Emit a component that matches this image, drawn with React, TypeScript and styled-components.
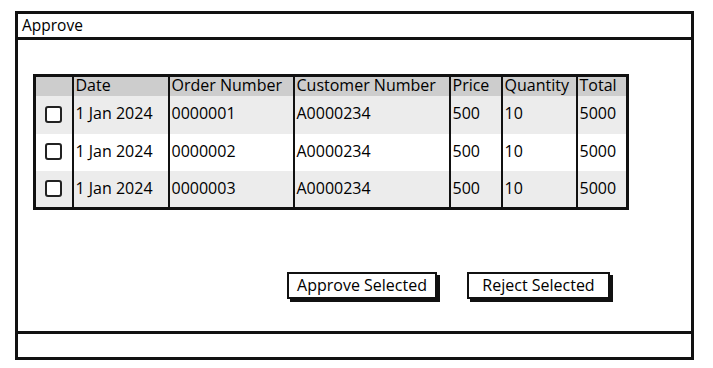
import styled, { createGlobalStyle } from "styled-components";

const GlobalStyle = createGlobalStyle`
  body {
    margin: 0;
    background: #fff;
    font-family: "Open Sans", "DejaVu Sans", sans-serif;
    color: #000;
  }
`;

type Order = {
  date: string;
  orderNumber: string;
  customerNumber: string;
  price: number;
  quantity: number;
};

const orders: Order[] = [
  { date: "1 Jan 2024", orderNumber: "0000001", customerNumber: "A0000234", price: 500, quantity: 10 },
  { date: "1 Jan 2024", orderNumber: "0000002", customerNumber: "A0000234", price: 500, quantity: 10 },
  { date: "1 Jan 2024", orderNumber: "0000003", customerNumber: "A0000234", price: 500, quantity: 10 },
];

const columns = [
  { title: "", width: 38 },
  { title: "Date", width: 96 },
  { title: "Order Number", width: 125 },
  { title: "Customer Number", width: 156 },
  { title: "Price", width: 52 },
  { title: "Quantity", width: 75 },
  { title: "Total", width: 51 },
];

export default function App() {
  return (
    <>
      <GlobalStyle />
      <Window>
        <TitleBar>Approve</TitleBar>
        <Content>
          <Table>
            <colgroup>
              {columns.map((c, i) => (
                <col key={i} style={{ width: c.width }} />
              ))}
            </colgroup>
            <thead>
              <tr>
                {columns.map((c, i) => (
                  <HeaderCell key={i}>{c.title}</HeaderCell>
                ))}
              </tr>
            </thead>
            <tbody>
              {orders.map((o, i) => (
                <Row key={o.orderNumber} $striped={i % 2 === 0}>
                  <CheckCell>
                    <Checkbox type="checkbox" />
                  </CheckCell>
                  <Cell>{o.date}</Cell>
                  <Cell>{o.orderNumber}</Cell>
                  <Cell>{o.customerNumber}</Cell>
                  <Cell>{o.price}</Cell>
                  <Cell>{o.quantity}</Cell>
                  <Cell>{o.price * o.quantity}</Cell>
                </Row>
              ))}
            </tbody>
          </Table>
          <Actions>
            <Button $width={150}>Approve Selected</Button>
            <Button $width={143}>Reject Selected</Button>
          </Actions>
        </Content>
        <Footer />
      </Window>
    </>
  );
}

const Window = styled.div`
  box-sizing: border-box;
  margin: 11px 0 0 15px;
  width: 679px;
  height: 349px;
  border: 3px solid #111;
  display: flex;
  flex-direction: column;
`;

const TitleBar = styled.div`
  height: 23px;
  line-height: 23px;
  padding-left: 4px;
  font-size: 15.5px;
  border-bottom: 3px solid #111;
`;

const Content = styled.div`
  flex: 1;
  padding: 34px 0 0 15px;
`;

const Table = styled.table`
  border-collapse: collapse;
  table-layout: fixed;
  border: 3px solid #111;
  font-size: 16px;
`;

const HeaderCell = styled.th`
  background: #cdcdcd;
  height: 19px;
  padding: 0 0 0 2px;
  text-align: left;
  font-weight: normal;
  white-space: nowrap;
  overflow: hidden;
  border-left: 2px solid #111;
  line-height: 17px;
  vertical-align: top;
  &:first-child {
    border-left: none;
  }
`;

const Row = styled.tr<{ $striped: boolean }>`
  background: ${(p) => (p.$striped ? "#ececec" : "#fff")};
  height: 37.5px;
`;

const Cell = styled.td`
  padding: 0 0 3px 2px;
  border-left: 2px solid #111;
  white-space: nowrap;
  overflow: hidden;
`;

const CheckCell = styled.td`
  padding: 0;
  text-align: center;
`;

const Checkbox = styled.input`
  appearance: none;
  margin: 4px 0 0 0;
  width: 17px;
  height: 17px;
  border: 2px solid #222;
  border-radius: 3px;
  background: #fff;
`;

const Actions = styled.div`
  display: flex;
  gap: 30px;
  margin: 62px 0 0 254px;
`;

const Button = styled.button<{ $width: number }>`
  box-sizing: border-box;
  width: ${(p) => p.$width}px;
  height: 27px;
  border: 2px solid #111;
  background: #fff;
  box-shadow: 3px 3px 0 #111;
  font-family: "Open Sans", "DejaVu Sans", sans-serif;
  font-size: 16px;
  color: #000;
  padding: 0 0 1px 0;
`;

const Footer = styled.div`
  height: 23px;
  border-top: 3px solid #111;
`;
